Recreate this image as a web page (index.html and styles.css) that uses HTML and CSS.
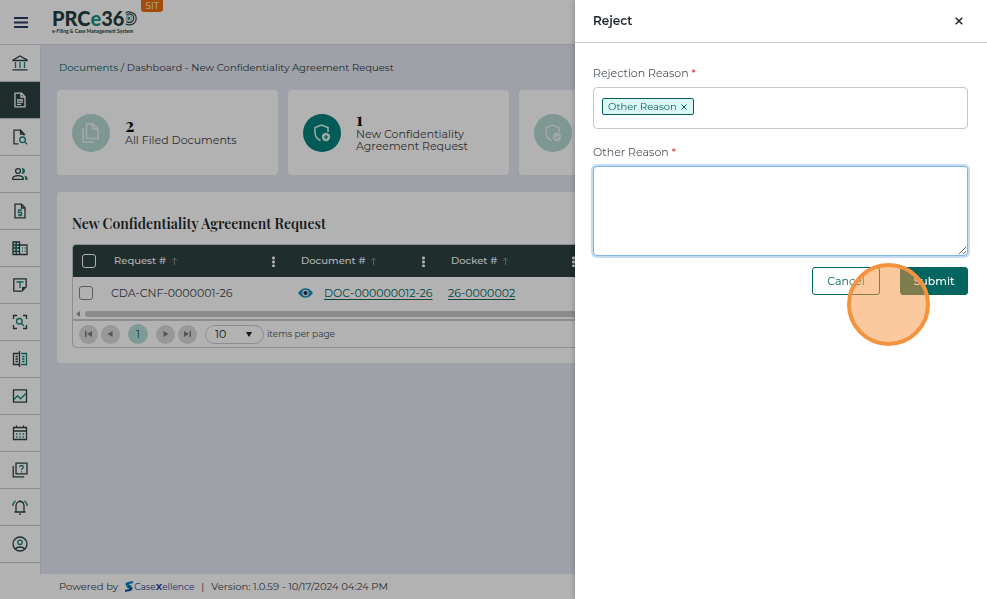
FILE: index.html
```html
<!DOCTYPE html>
<html lang="en">
<head>
<meta charset="utf-8">
<meta name="viewport" content="width=device-width, initial-scale=1">
<title>Reject</title>
<link rel="stylesheet" href="styles.css">
</head>
<body>
<div class="app">
  <header class="topbar">
    <button class="menu-btn" type="button" aria-label="Menu">
      <svg width="14" height="11" viewBox="0 0 14 11"><path d="M0 1h14M0 5.500h14M0 10h14" stroke="#263c60" stroke-width="2"/></svg>
    </button>
    <a class="logo" href="#">
      <span class="logo-name">PRC<span class="logo-e">e</span>36<svg width="13" height="17" viewBox="0 0 16 18" fill="none"><path d="M2 2.500C4 .6 7 .8 9 1.500c4 1 6 4 6 7.500s-2 6.500-6 7.500c-2 .6-5 .5-7-1" stroke="#2b4545" stroke-width="1.400"/><path d="M3 5c2-2 5-2 7-.5s3 6 .5 8-5.500 2-7.500 0" stroke="#2b4545" stroke-width="1.500"/><circle cx="6" cy="9" r="3.500" stroke="#7b9a9a"/><circle cx="6" cy="9" r="1.800" fill="#23907f"/></svg></span>
      <span class="logo-sub">e-Filing &amp; Case Management System</span>
    </a>
    <span class="env">SIT</span>
  </header>

  <div class="shell">
    <nav class="side" aria-label="Main">
      <a href="#" aria-label="Home"><svg viewBox="0 0 16 16"><path class="k" d="M1 5 8 1l7 4v.5H1zM.5 14.800h15"/><path class="t" d="M3.500 7v6M8 7v6M12.500 7v6"/></svg></a>
      <a href="#" aria-label="Documents" class="on"><svg viewBox="0 0 16 16"><path class="w" d="M3 1.200h6.500L13 4.700v10.100H3zM9 1.500V5h4M5 8h6M5 10.200h6M5 12.400h4"/></svg></a>
      <a href="#" aria-label="Search documents"><svg viewBox="0 0 16 16"><path class="k" d="M6.500 14.800H2V1.200h6.500L12 4.700v1.800M8.500 1.500V5H12z"/><circle class="t" cx="10.500" cy="10.800" r="2.800"/><path class="t" d="m12.500 12.800 2.700 2.400"/></svg></a>
      <a href="#" aria-label="People"><svg viewBox="0 0 16 16"><circle class="k" cx="6" cy="5" r="2.400"/><path class="k" d="M.8 13.300v-1.500C1.500 10 4 9.600 6 9.600s4.500.4 5.200 2.200v1.500z"/><path class="tf" d="M9.500 2c2-.3 3.500 1.200 3.500 3s-1.500 3.300-3.500 3c1.300-2 1.300-4 0-6zM12 9.500c2 .4 3.600 1.200 3.600 2.800v1.700h-2.400c0-2 0-3-1.200-4.500z"/></svg></a>
      <a href="#" aria-label="Payments"><svg viewBox="0 0 16 16"><path class="k" d="M3 1.200h6.500L13 4.700v10.100H3zM9.500 1.500V5H13"/><path class="t" d="M10 7.200H6.500v2.300h3v2.500H6M8 6v1.200M8 12v1.500"/></svg></a>
      <a href="#" aria-label="Organizations"><svg viewBox="0 0 16 16"><path class="k" d="M1 2h6.500v12.500H1zM7.500 5H15v9.500H7.500M1 5h6.500M1 8h6.500M1 11.300h6.500M4.200 2v12.500"/><path class="t" d="M4.200 5v6.500M2 8h5M10 8h1M12.500 8h1M10 11h1M12.500 11h1"/></svg></a>
      <a href="#" aria-label="Templates"><svg viewBox="0 0 16 16"><path class="k" d="M10 14.200H1.800V1.800h12.400v8z"/><path class="kf" d="M10 14.200V10h4.200z"/><path class="t" d="M4.500 5h7M8 5v6"/></svg></a>
      <a href="#" aria-label="Scan"><svg viewBox="0 0 16 16"><path class="k" d="M1.500 5V1.500H5M11 1.500h3.500V5M14.500 11v3.500H11M5 14.500H1.500V11"/><circle class="t" cx="7.300" cy="7.300" r="2.800"/><path class="t" d="m9.300 9.300 2.700 2.700"/></svg></a>
      <a href="#" aria-label="Compare"><svg viewBox="0 0 16 16"><path class="k" d="M7.500 0v16M7 2.500H1.500v11H7M3.500 5.500H6M3.500 8H6M3.500 10.500H6"/><path class="t" d="M9 2.500h5.500v11H9M10 5.500h2.500M10 8h2.500M10 10.500h2.500"/></svg></a>
      <a href="#" aria-label="Reports"><svg viewBox="0 0 16 16"><path class="k" d="M1.500 1.800h13v12.400h-13z"/><path class="t" d="m2 11.500 3.500-3.700 3 3L14 5.500"/></svg></a>
      <a href="#" aria-label="Calendar"><svg viewBox="0 0 16 16"><path class="k" d="M1.500 2.500h13v12h-13zM1.500 6h13M4.500.5v2M11.500.5v2"/><path class="t" d="M4 9h1.500M7.300 9h1.500M10.600 9h1.500M4 12h1.500M7.300 12h1.500M10.600 12h1.500"/></svg></a>
      <a href="#" aria-label="Help"><svg viewBox="0 0 16 16"><path class="k" d="M4 1.200h11v10.600H4zM1.200 4v10.800h11"/><path class="t" d="M7.800 5c0-2 3.500-2 3.500 0 0 1.500-1.800 1.400-1.800 3M9.500 9.200v1.300"/></svg></a>
      <a href="#" aria-label="Notifications"><svg viewBox="0 0 16 16"><path class="k" d="M2.500 13h11M4 13V7c0-2.500 1.500-4.500 4-4.500s4 2 4 4.500v6M8 1v1.500M7 15.200h2"/><path class="t" d="M.8 7c.1-2.500 1-4 2.800-5.300M15.200 7c-.1-2.500-1-4-2.800-5.300"/></svg></a>
      <a href="#" aria-label="Profile"><svg viewBox="0 0 16 16"><circle class="k" cx="8" cy="8" r="7"/><path class="k" d="M3.300 12.700c2.500-2.300 6.900-2.300 9.400 0"/><circle class="t" cx="8" cy="6.300" r="2.200"/></svg></a>
    </nav>

    <div class="page">
      <main class="main">
        <p class="crumbs"><a href="#">Documents</a> / Dashboard - New Confidentiality Agreement Request</p>

        <div class="cards">
          <section class="card">
            <span class="disc"><svg width="20" height="22" viewBox="0 0 20 22"><path d="M5.500 2H12l5 5v9.500H5.500zM11.500 2.500V7H17M2 6v14h11"/></svg></span>
            <div><strong class="count">2</strong><p>All Filed Documents</p></div>
          </section>
          <section class="card">
            <span class="disc disc-on"><svg width="18" height="20" viewBox="0 0 18 20"><path d="M7.500 17.500C4 16 2 13 2 9V4.500L8.500 2 15 4.500V9"/><circle class="dot" cx="13" cy="14" r="4.200"/><path class="mark" d="M10.800 14h4.400M13 11.800v4.400"/></svg></span>
            <div><strong class="count">1</strong><p>New Confidentiality Agreement Request</p></div>
          </section>
          <section class="card">
            <span class="disc"><svg width="18" height="20" viewBox="0 0 18 20"><path d="M7.500 17.500C4 16 2 13 2 9V4.500L8.500 2 15 4.500V9"/><circle class="dot" cx="13" cy="14" r="4.200"/><path class="mark" d="m11 14 1.500 1.500L15 12.800"/></svg></span>
          </section>
        </div>

        <section class="panel">
          <h2>New Confidentiality Agreement Request</h2>
          <div class="grid">
            <table>
              <colgroup><col class="c-check"><col class="c-req"><col class="c-doc"><col class="c-doc"><col></colgroup>
              <thead>
                <tr>
                  <th><input type="checkbox" aria-label="Select all"></th>
                  <th><div class="th"><span>Request #</span><svg class="sort" width="7" height="8" viewBox="0 0 7 8"><path d="M3.500 8V1M.8 3.700 3.500 1l2.700 2.700"/></svg><button type="button" class="dots" aria-label="Request column menu"></button></div></th>
                  <th><div class="th"><span>Document #</span><svg class="sort" width="7" height="8" viewBox="0 0 7 8"><path d="M3.500 8V1M.8 3.700 3.500 1l2.700 2.700"/></svg><button type="button" class="dots" aria-label="Document column menu"></button></div></th>
                  <th><div class="th"><span>Docket #</span><svg class="sort" width="7" height="8" viewBox="0 0 7 8"><path d="M3.500 8V1M.8 3.700 3.500 1l2.700 2.700"/></svg><button type="button" class="dots" aria-label="Docket column menu"></button></div></th>
                  <th></th>
                </tr>
              </thead>
              <tbody>
                <tr>
                  <td><input type="checkbox" aria-label="Select request"></td>
                  <td>CDA-CNF-0000001-26</td>
                  <td><div class="doc"><svg width="15" height="10" viewBox="0 0 15 10"><path d="M0 5c4-6.300 11-6.300 15 0-4 6.300-11 6.300-15 0z" fill="#1c8fbd"/><circle cx="7.500" cy="5" r="3.200" fill="#d9eef5"/><circle cx="7.500" cy="5" r="2" fill="#16384c"/></svg><a href="#">DOC-000000012-26</a></div></td>
                  <td><a href="#">26-0000002</a></td>
                  <td></td>
                </tr>
              </tbody>
            </table>
            <div class="hscroll"><i class="arrow"></i><i class="thumb"></i></div>
            <div class="pager">
              <button type="button" aria-label="First page"><svg width="9" height="8" viewBox="0 0 9 8"><path d="M1 1h1.500v6H1zM8 1v6L3 4z"/></svg></button>
              <button type="button" aria-label="Previous page"><svg width="9" height="8" viewBox="0 0 9 8"><path d="M6.500 1v6l-5-3z"/></svg></button>
              <button type="button" class="cur">1</button>
              <button type="button" aria-label="Next page"><svg width="9" height="8" viewBox="0 0 9 8"><path d="M2.500 1v6l5-3z"/></svg></button>
              <button type="button" aria-label="Last page"><svg width="9" height="8" viewBox="0 0 9 8"><path d="M1 1v6l5-3zM6.500 1H8v6H6.500z"/></svg></button>
              <span class="size"><select id="size"><option>10</option></select></span>
              <label for="size">items per page</label>
            </div>
          </div>
        </section>
      </main>

      <footer class="foot">
        <span>Powered by</span>
        <a class="brand" href="#"><svg width="8" height="11" viewBox="0 0 8 11"><path d="M8 0 3 1C1 1.500 0 2.600.5 4c.5 1.200 2.500 1.500 4 2L7.500 5C6.500 4 3.500 4 3.800 3L8 2.300z" fill="#0b7fc0"/><path d="M0 11l5-1c2-.5 3-1.800 2.500-3.200C7 5.600 5 5.500 3.500 5L1 6c1 1 3.600 1 3.300 2L0 8.800z" fill="#0a5fa8"/></svg><span>Case<b>X</b>ellence</span></a>
        <span>|</span>
        <span>Version: 1.0.59 - 10/17/2024 04:24 PM</span>
      </footer>
    </div>
  </div>
</div>

<div class="backdrop"></div>

<aside class="drawer" role="dialog" aria-labelledby="drawer-title">
  <header class="drawer-head">
    <h1 id="drawer-title">Reject</h1>
    <button type="button" class="close" aria-label="Close"><svg width="8" height="8" viewBox="0 0 8 8"><path d="m.7.7 6.600 6.600M7.300.7.700 7.300" stroke="#1d2329" stroke-width="1.500"/></svg></button>
  </header>
  <form class="form">
    <label for="reason">Rejection Reason <em>*</em></label>
    <div class="multi">
      <span class="tag">Other Reason<button type="button" aria-label="Remove"><svg width="6" height="6" viewBox="0 0 6 6"><path d="m.5.5 5 5M5.500.5l-5 5" stroke="#0b5f5a"/></svg></button></span>
      <input id="reason" type="text">
    </div>
    <label for="other">Other Reason <em>*</em></label>
    <textarea id="other"></textarea>
    <div class="actions">
      <button type="button" class="btn">Cancel</button>
      <button type="button" class="btn primary">Submit</button>
    </div>
  </form>
  <span class="pointer"></span>
</aside>
</body>
</html>
```
FILE: styles.css
```css
* { box-sizing: border-box; }

body {
  margin: 0;
  font-family: Montserrat, Inter, sans-serif;
  font-size: 11px;
  line-height: 12px;
  color: #3f454b;
}

button, input, select, textarea { font: inherit; color: inherit; margin: 0; }
button { padding: 0; border: 0; background: none; }
p, h1, h2 { margin: 0; }
svg { display: block; flex: none; }

.app { display: flex; flex-direction: column; min-height: 100vh; background: #fff; }

/* Top bar */
.topbar {
  display: flex;
  align-items: flex-start;
  height: 45px;
  border-bottom: 1px solid #d3d6da;
}
.menu-btn { display: grid; place-items: center; width: 41px; height: 44px; }
.logo { margin-left: 11px; padding-top: 8px; text-decoration: none; color: #233f40; }
.logo-name { display: flex; align-items: center; font: 900 20px/20px Lato, sans-serif; }
.logo-e { color: #23907f; }
.logo-sub { display: block; font: bold 5px/6px Lato, sans-serif; }
.env {
  margin-left: 4px;
  padding: 0 4px;
  background: #ec6c0e;
  border-radius: 0 0 3px 3px;
  color: #fff;
  font-size: 9px;
}

.shell { flex: 1; display: flex; }

/* Side navigation */
.side { width: 40px; flex: none; }
.side a {
  display: grid;
  place-items: center;
  height: 37px;
  border-bottom: 1px solid #c5c8cd;
}
.side .on { background: #2d4141; }
.side svg { width: 16px; height: 16px; fill: none; stroke-width: 1.300; }
.k { stroke: #2d4141; }
.kf { fill: #2d4141; }
.t { stroke: #178478; }
.tf { fill: #178478; }
.w { stroke: #fff; }

.page { flex: 1; min-width: 0; display: flex; flex-direction: column; }
.main { flex: 1; padding: 17px 16px 16px; background: #e2e7ef; border-left: 1px solid #d6dbe2; }
.crumbs { padding: 0 2px 16px; font-size: 10px; color: #333c46; }
.crumbs a { color: #00665f; text-decoration: none; }

/* Summary cards */
.cards { display: grid; grid-template-columns: repeat(4, 1fr); gap: 10px; }
.card {
  display: flex;
  align-items: center;
  gap: 15px;
  height: 85px;
  padding: 0 15px;
  background: #fff;
  border-radius: 4px;
}
.disc {
  display: grid;
  place-items: center;
  flex: none;
  width: 38px;
  height: 38px;
  border-radius: 50%;
  background: #b5d8d3;
  color: #b5d8d3;
}
.disc-on { background: #00837b; color: #00837b; }
.disc svg { fill: none; stroke: #e9f4f3; stroke-width: 1.500; }
.disc .dot { fill: #e9f4f3; stroke: none; }
.disc .mark { stroke: currentColor; stroke-width: 1.200; }
.count { display: block; font: bold 18px/12px "Playfair Display", "Liberation Serif", serif; padding-bottom: 3px; color: #111; }

/* Request grid */
.panel { margin-top: 17px; padding: 23px 15px 15px; background: #fff; border-radius: 4px; }
.panel h2 { font: 600 14px/18px "Playfair Display", "Liberation Serif", serif; color: #212529; }
.grid { margin-top: 11px; border: 1px solid #c8cbcf; border-radius: 4px; overflow: hidden; }
table { width: 100%; table-layout: fixed; border-collapse: collapse; }
.c-check { width: 33px; }
.c-req { width: 187px; }
.c-doc { width: 150px; }
th { height: 32px; padding: 0 8px; background: #2d4141; color: #fff; font-size: 10px; font-weight: 500; text-align: left; }
td { height: 31px; padding: 0 5px; }
th:first-child { padding-left: 9px; }
td:first-child { padding-left: 6px; }
td a { color: #00665f; text-underline-offset: 2px; }
.th { display: flex; align-items: center; gap: 5px; }
.sort { fill: none; stroke: #7d8c8c; }
.dots {
  width: 3px;
  height: 11px;
  margin: 0 10px 0 auto;
  background: radial-gradient(circle, #fff 1px, transparent 2px) 0 0 / 3px 4px;
}
.doc { display: flex; align-items: center; gap: 11px; }
input[type="checkbox"] {
  display: block;
  appearance: none;
  width: 14px;
  height: 14px;
  border: 1px solid #80868b;
  border-radius: 3px;
  background: #fff;
}
th input[type="checkbox"] { border-color: #fff; background: none; }
.hscroll { display: flex; align-items: center; gap: 5px; height: 13px; padding-left: 3px; border-bottom: 2px solid #c8cbcf; }
.arrow { border: solid transparent; border-width: 3px 4px 3px 0; border-right-color: #9a9a9a; }
.thumb { flex: 1; height: 6px; border-radius: 3px 0 0 3px; background: #c8c8c8; }
.pager { display: flex; align-items: center; height: 26px; padding-left: 6px; gap: 3px; }
.pager button {
  display: grid;
  place-items: center;
  width: 19px;
  height: 19px;
  border-radius: 50%;
  background: #dadada;
}
.pager svg { fill: #7c7c7c; }
.pager .cur { width: 20px; height: 20px; margin: 0 5px; background: #b5dcd7; color: #00665f; }
.size {
  position: relative;
  width: 59px;
  margin-left: 5px;
}
.size::after {
  content: "";
  position: absolute;
  right: 12px;
  top: 7px;
  border: solid transparent;
  border-width: 5px 3px 0;
  border-top-color: #222;
}
.size select {
  display: block;
  appearance: none;
  width: 100%;
  height: 19px;
  padding: 0 9px;
  border: 1px solid #c8cbcf;
  border-radius: 10px;
  background: #fff;
  color: #222;
}
.pager label { font-size: 9px; color: #4a4f55; }

/* Footer */
.foot { display: flex; align-items: center; gap: 7px; height: 25px; padding-left: 19px; font-size: 10px; }
.brand { display: flex; align-items: center; gap: 1px; color: #1f3f9c; text-decoration: none; font-size: 9px; }

/* Reject drawer */
.backdrop { position: fixed; inset: 0; background: rgba(0, 0, 0, 0.3); }
.drawer {
  position: fixed;
  top: 0;
  right: 0;
  bottom: 0;
  width: 412px;
  max-width: 100%;
  background: #fff;
  box-shadow: 0 0 6px rgba(0, 0, 0, 0.3);
}
.drawer-head {
  display: flex;
  align-items: center;
  justify-content: space-between;
  height: 43px;
  padding: 0 24px 0 18px;
  border-bottom: 1px solid #c8cbcf;
}
.drawer-head h1 { font-size: 12px; font-weight: 600; color: #1d2329; }
.form { display: flex; flex-direction: column; padding: 24px 19px 0 18px; }
.form label { margin-bottom: 8px; color: #4b535c; }
.form em { color: #e02020; font-style: normal; }
.multi {
  display: flex;
  align-items: flex-start;
  gap: 6px;
  height: 42px;
  padding: 10px 8px;
  margin-bottom: 17px;
  border: 1px solid #c4c7cb;
  border-radius: 4px;
}
.tag {
  display: flex;
  align-items: center;
  gap: 4px;
  height: 17px;
  padding: 0 6px 0 5px;
  border: 1px solid #0b5f5a;
  border-radius: 2px;
  background: #d9f6f4;
  color: #0b5f5a;
  font-size: 10px;
  white-space: nowrap;
}
.multi input { flex: 1; min-width: 0; height: 17px; padding: 0; border: 0; outline: 0; background: none; }
.form textarea {
  height: 90px;
  border: 1px solid #7fb3e6;
  border-radius: 4px;
  box-shadow: 0 0 0 2px #c3dbf5;
  outline: 0;
  resize: vertical;
}
.actions { display: flex; justify-content: flex-end; gap: 20px; margin-top: 11px; }
.btn {
  width: 68px;
  height: 28px;
  border: 1px solid #00665f;
  border-radius: 3px;
  background: #fff;
  color: #00665f;
}
.primary { background: #00665f; color: #fff; font-weight: 500; }
.pointer {
  position: absolute;
  top: 263px;
  right: 57px;
  width: 83px;
  height: 83px;
  border: 4px solid #f5923e;
  border-radius: 50%;
  background: rgba(249, 148, 62, 0.5);
}
```
